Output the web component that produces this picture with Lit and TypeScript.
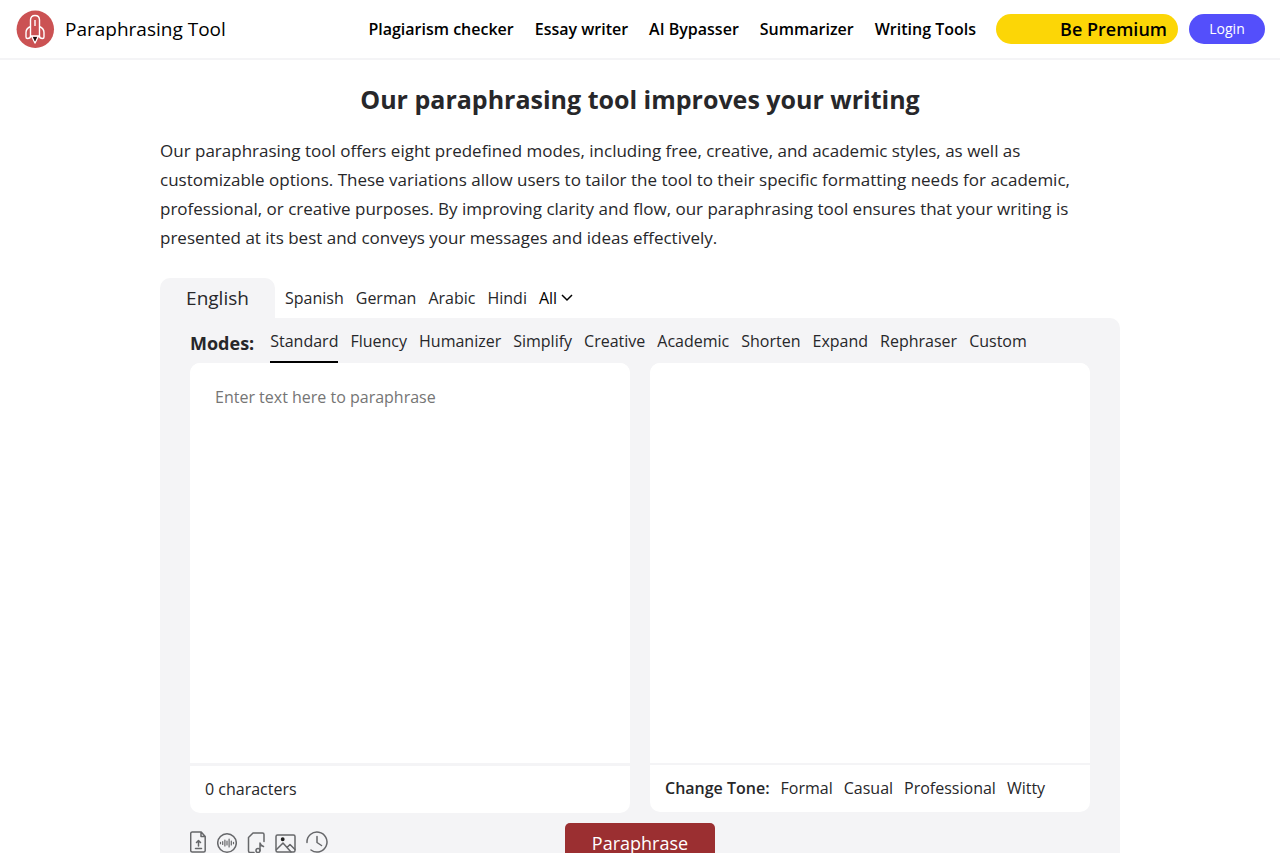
import { LitElement, html, css, svg } from "lit";
import { customElement, state } from "lit/decorators.js";
import { classMap } from "lit/directives/class-map.js";

const NAV = ["Plagiarism checker", "Essay writer", "AI Bypasser", "Summarizer", "Writing Tools"];
const LANGS = ["Spanish", "German", "Arabic", "Hindi"];
const MODES = ["Standard", "Fluency", "Humanizer", "Simplify", "Creative", "Academic", "Shorten", "Expand", "Rephraser", "Custom"];
const TONES = ["Formal", "Casual", "Professional", "Witty"];

const TOOLS = [
  {
    label: "Upload file",
    w: 17,
    art: svg`<path d="M2.200 1h9l4 4.500v14a1.500 1.500 0 0 1-1.500 1.500h-11.500a1.500 1.500 0 0 1-1.500-1.500v-17a1.500 1.500 0 0 1 1.500-1.500zM11 1v4.500h4M8.500 15v-5M6.500 11.500l2-2 2 2M5.500 17.500h6"/>`,
  },
  {
    label: "Voice",
    w: 20,
    art: svg`<circle cx="10" cy="12" r="9.300"/><path class="thin" d="M3.500 11.300v1.400M5.700 10.500v3M7.900 9v6M10 10v4M12.100 8v8M14.300 10v4M16.500 11.300v1.400"/>`,
  },
  {
    label: "Audio file",
    w: 18,
    art: svg`<path d="M7 21.500h-4a1.500 1.500 0 0 1-1.500-1.500v-13.500l4.500-4.500h9.500a1.500 1.500 0 0 1 1.500 1.500v7M13 19.500v-7.500q.5 2.500 3.500 3.500"/><circle cx="11" cy="19.500" r="2"/>`,
  },
  {
    label: "Image",
    w: 21,
    art: svg`<rect x="1" y="4" width="19" height="17" rx="1.500"/><path d="M1.500 18.500l6.500-6.500 8 9M12 16.500l3-3 5 5"/><circle class="dot" cx="7.700" cy="8.300" r="1.200"/>`,
  },
  {
    label: "History",
    w: 22,
    art: svg`<path d="M1 11.500a10 10 0 1 1 4 7.500M11 5.500v6l4.500 3"/>`,
  },
];

@customElement("app-root")
class AppRoot extends LitElement {
  @state() private mode = "Standard";
  @state() private text = "";

  static styles = css`
    :host {
      display: block;
      min-height: 100vh;
      background: #fff;
      color: #27272a;
      font: 16px/24px "Open Sans", "Noto Sans", sans-serif;
    }
    * { box-sizing: border-box; }
    a { color: inherit; text-decoration: none; }
    button { font: inherit; color: inherit; border: 0; padding: 0; background: none; cursor: pointer; }
    svg { display: block; }
    .top {
      display: flex;
      align-items: center;
      height: 60px;
      padding: 0 15px;
      border-bottom: 2px solid #f4f4f6;
      color: #000;
    }
    .brand { display: flex; align-items: center; gap: 10px; font-size: 19px; margin-right: auto; }
    .nav { display: flex; gap: 21px; font-weight: 600; }
    .premium {
      width: 182px;
      height: 30px;
      margin-left: 20px;
      padding-right: 11px;
      border-radius: 15px;
      background: #fcd606;
      font-size: 18px;
      font-weight: 600;
      text-align: right;
      line-height: 30px;
    }
    .login {
      width: 76px;
      height: 30px;
      margin-left: 11px;
      border-radius: 15px;
      background: #544ffb;
      color: #fff;
      font-size: 14px;
    }
    main { max-width: 960px; margin: 0 auto; }
    h1 { margin: 21px 0 19px; font-size: 25px; line-height: 36px; font-weight: 700; text-align: center; }
    .intro { margin: 0 0 26px; font-size: 17px; line-height: 29px; }
    .langs { display: flex; align-items: center; height: 40px; }
    .active-lang {
      width: 115px;
      height: 40px;
      margin-right: 10px;
      border-radius: 10px 10px 0 0;
      background: #f4f4f6;
      font-size: 19px;
    }
    .lang-list { display: flex; gap: 12px; }
    .all { display: flex; align-items: center; gap: 4px; color: #000; }
    .panel { padding: 0 30px 30px; background: #f4f4f6; border-radius: 0 10px 0 0; }
    .modes { display: flex; height: 45px; }
    .modes-label { margin: 0 16px 0 0; padding-top: 6px; font-size: 18px; line-height: 39px; font-weight: 700; }
    .mode-list { display: flex; gap: 12px; }
    .mode { padding-top: 2px; border-bottom: 2px solid transparent; }
    .mode.on { border-color: #000; }
    .boxes { display: grid; grid-template-columns: 1fr 1fr; gap: 20px; align-items: start; }
    .box { border-radius: 10px; background: #fff; overflow: hidden; }
    textarea, .result {
      display: block;
      width: 100%;
      height: 400px;
      border: 0;
      outline: 0;
      resize: none;
      padding: 22px 25px;
      background: #fff;
      color: inherit;
      font: inherit;
    }
    textarea::placeholder { color: #757575; }
    .foot { display: flex; gap: 11px; align-items: center; padding: 11px 15px 12px; border-top: 3px solid #f4f4f6; }
    .foot.tones { border-top-width: 2px; }
    .strong { font-weight: 600; }
    .actions { display: grid; grid-template-columns: 1fr 150px 1fr; align-items: center; margin-top: 10px; }
    .tools { display: flex; gap: 10px; }
    .tools svg { fill: none; stroke: #66676a; stroke-width: 1.500; stroke-linecap: round; stroke-linejoin: round; }
    .tools .dot { fill: #222; stroke: #222; }
    .tools .thin { stroke-width: 1.200; }
    .go { height: 40px; border-radius: 5px; background: #9b2f31; color: #fff; font-size: 18px; }
  `;

  render() {
    return html`
      <header class="top">
        <a class="brand" href="#">
          <svg width="40" height="40" viewBox="0 0 40 40" fill="none" stroke="#fff" stroke-width="1.400" stroke-linejoin="round" aria-hidden="true">
            <circle cx="20.300" cy="20.300" r="18.700" fill="#cb5253" stroke="none"/>
            <path d="M15.500 27v-16q0-4.500 4.500-4.500t4.500 4.500v16zM20 11v6M15.500 17.500q-4.500 2-4.500 6v4.500q0 1.500 1.500 1.500 3 0 3-2.500M24.500 17.500q4.500 2 4.500 6v4.500q0 1.500-1.500 1.500-3 0-3-2.500M16.500 27l3.500 7 3.500-7"/>
            <path d="M18 28h4l-2 4.500z" fill="#111" stroke="none"/>
          </svg>
          <span>Paraphrasing Tool</span>
        </a>
        <nav class="nav">${NAV.map((n) => html`<a href="#">${n}</a>`)}</nav>
        <a class="premium" href="#">Be Premium</a>
        <button class="login">Login</button>
      </header>
      <main>
        <h1>Our paraphrasing tool improves your writing</h1>
        <p class="intro">
          Our paraphrasing tool offers eight predefined modes, including free, creative, and academic styles, as well as
          customizable options. These variations allow users to tailor the tool to their specific formatting needs for academic,
          professional, or creative purposes. By improving clarity and flow, our paraphrasing tool ensures that your writing is
          presented at its best and conveys your messages and ideas effectively.
        </p>
        <div class="langs">
          <button class="active-lang">English</button>
          <div class="lang-list">
            ${LANGS.map((l) => html`<button>${l}</button>`)}
            <button class="all">All
              <svg width="12" height="8" viewBox="0 0 12 8" fill="none" stroke="#000" stroke-width="1.500" aria-hidden="true"><path d="M1 1l5 5 5-5"/></svg>
            </button>
          </div>
        </div>
        <section class="panel">
          <div class="modes">
            <p class="modes-label">Modes:</p>
            <div class="mode-list">
              ${MODES.map((m) => html`<button class=${classMap({ mode: true, on: m === this.mode })} @click=${() => (this.mode = m)}>${m}</button>`)}
            </div>
          </div>
          <div class="boxes">
            <div class="box">
              <textarea aria-label="Text to paraphrase" placeholder="Enter text here to paraphrase" .value=${this.text}
                @input=${(e: Event) => (this.text = (e.target as HTMLTextAreaElement).value)}></textarea>
              <div class="foot">${this.text.length} characters</div>
            </div>
            <div class="box">
              <div class="result"></div>
              <div class="foot tones"><span class="strong">Change Tone:</span>${TONES.map((t) => html`<button>${t}</button>`)}</div>
            </div>
          </div>
          <div class="actions">
            <div class="tools">
              ${TOOLS.map((t) => html`<button aria-label=${t.label}><svg width=${t.w} height="24" viewBox="0 0 ${t.w} 24">${t.art}</svg></button>`)}
            </div>
            <button class="go">Paraphrase</button>
          </div>
        </section>
      </main>
    `;
  }
}
